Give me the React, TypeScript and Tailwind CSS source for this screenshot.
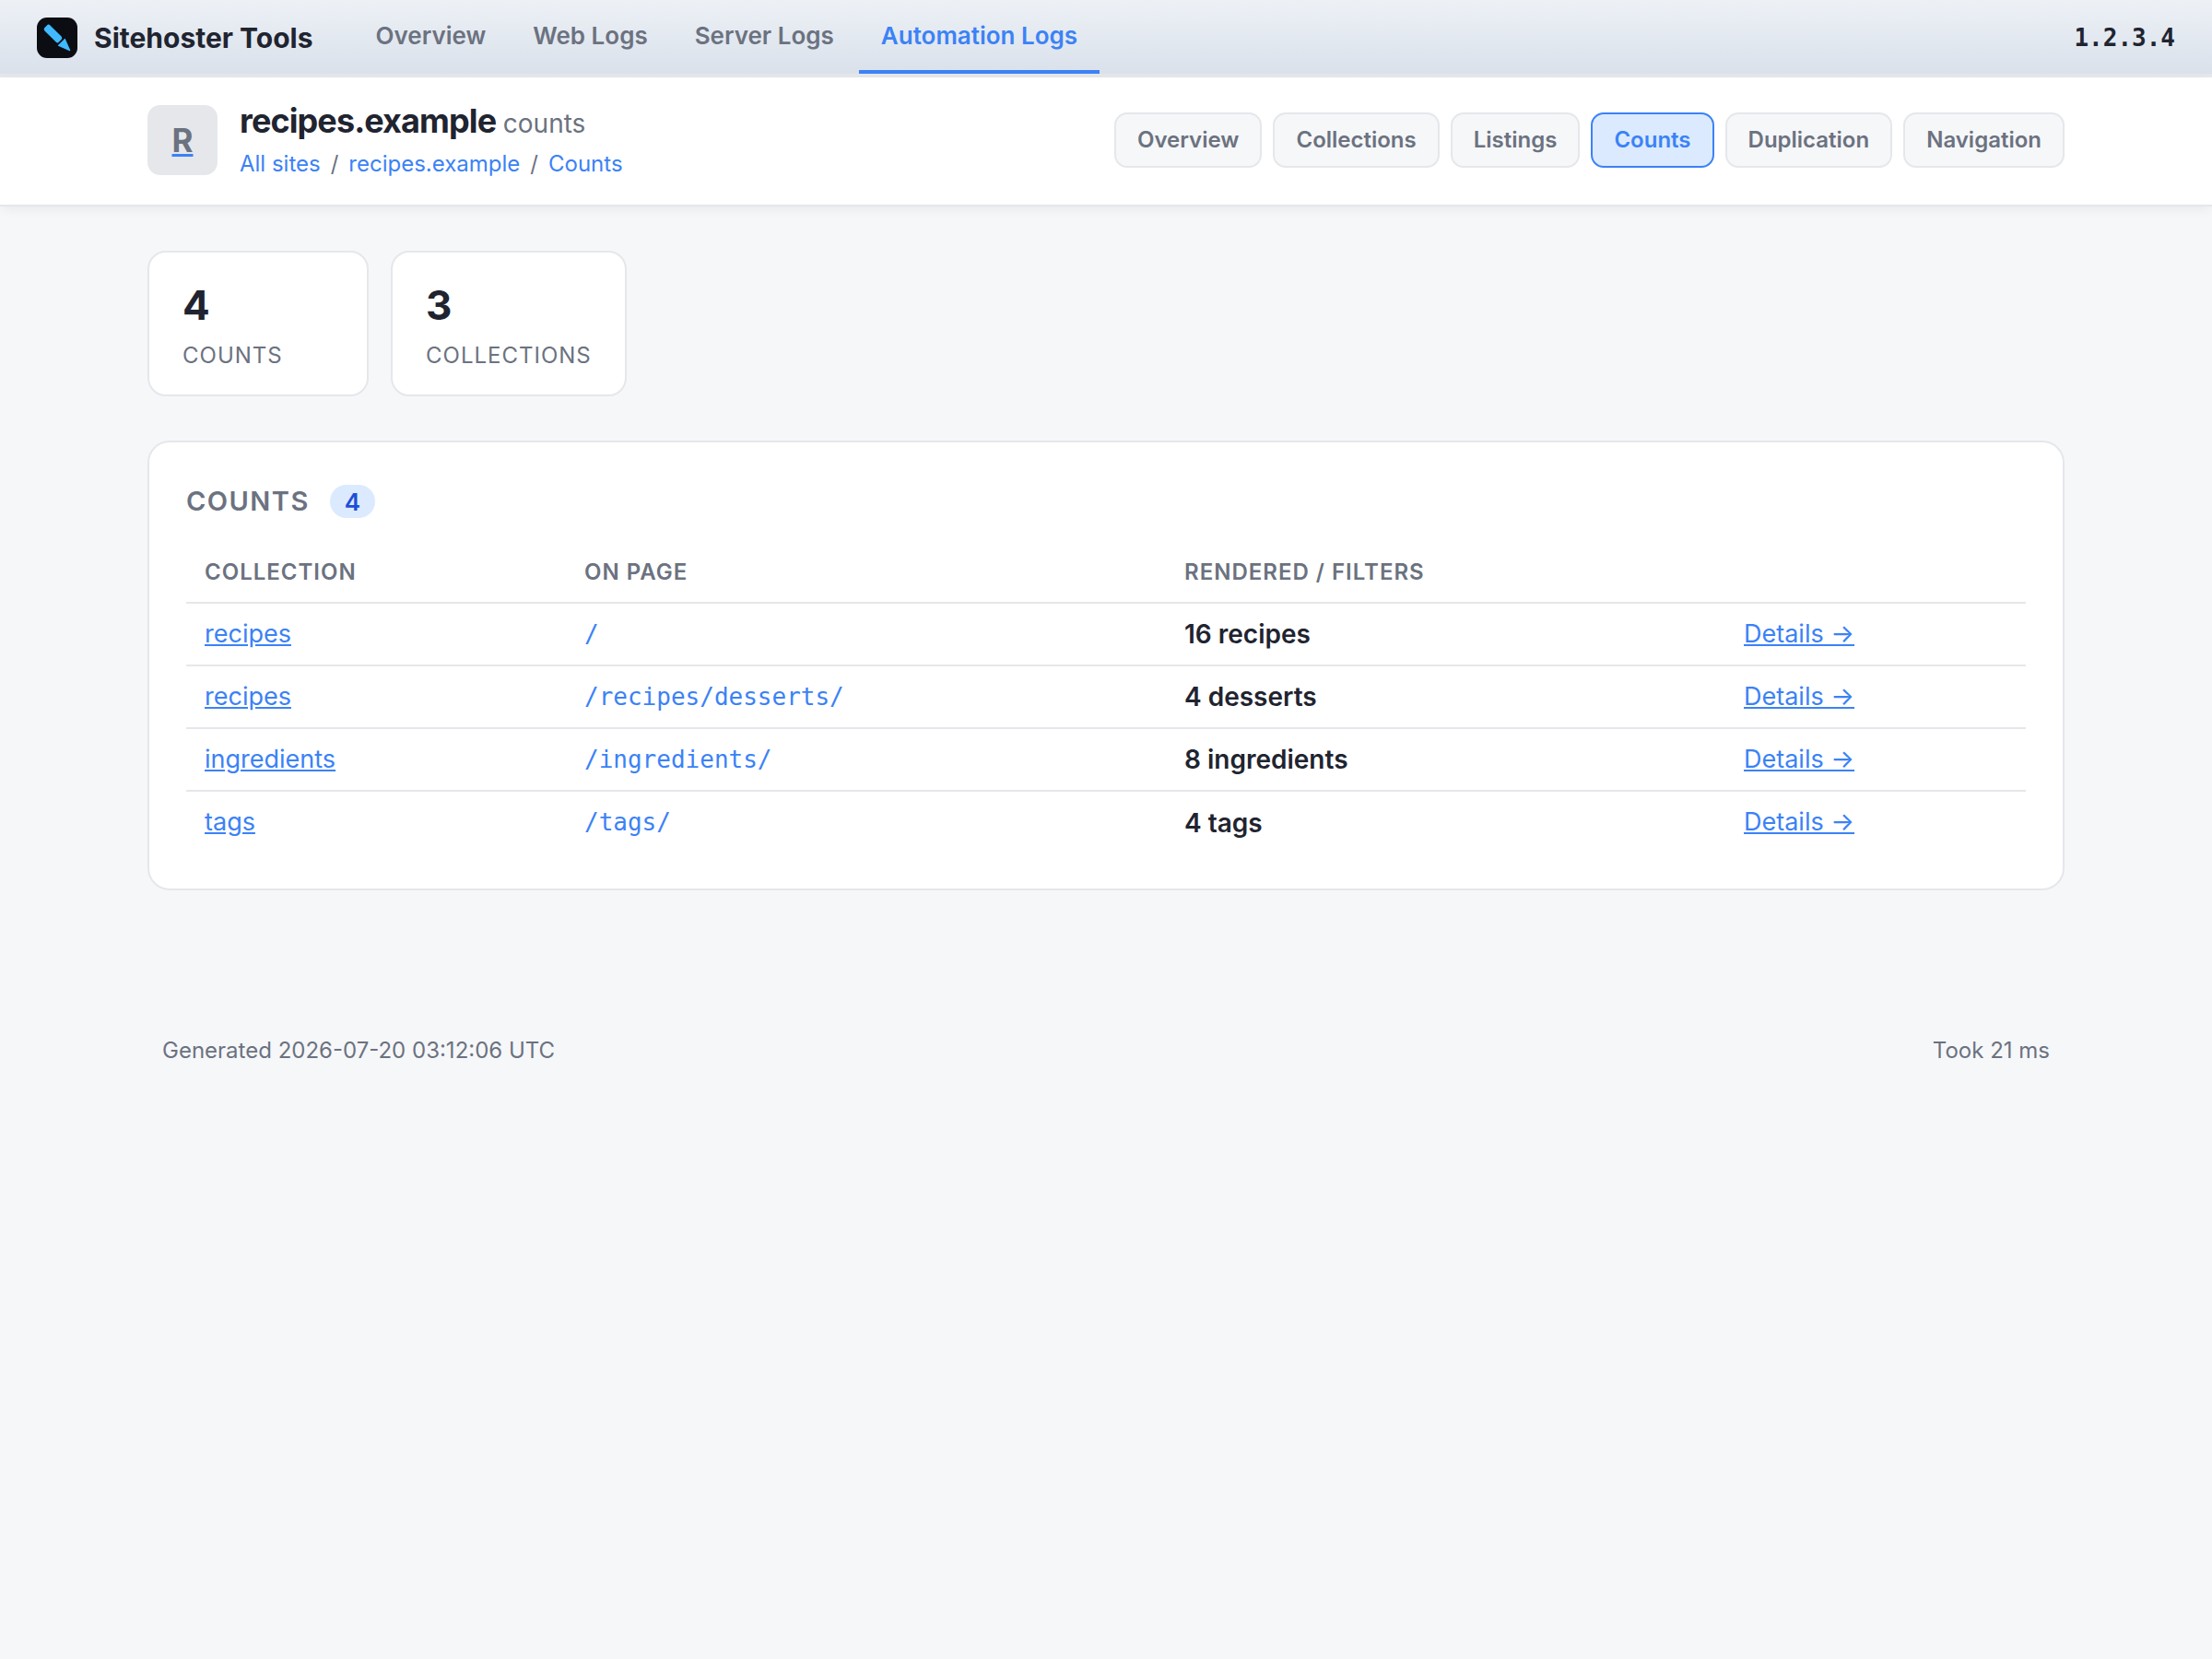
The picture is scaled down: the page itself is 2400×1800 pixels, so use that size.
import clsx from 'clsx';

interface NavItem {
    label: string;
    active?: boolean;
}

interface CountRow {
    id: number;
    collection: string;
    page: string;
    rendered: string;
}

const mainNav: NavItem[] = [
    { label: 'Overview' },
    { label: 'Web Logs' },
    { label: 'Server Logs' },
    { label: 'Automation Logs', active: true },
];

const siteNav: NavItem[] = [
    { label: 'Overview' },
    { label: 'Collections' },
    { label: 'Listings' },
    { label: 'Counts', active: true },
    { label: 'Duplication' },
    { label: 'Navigation' },
];

const crumbs = ['All sites', 'recipes.example', 'Counts'];

const stats = [
    { value: 4, label: 'Counts' },
    { value: 3, label: 'Collections' },
];

const rows: CountRow[] = [
    { id: 1, collection: 'recipes', page: '/', rendered: '16 recipes' },
    { id: 2, collection: 'recipes', page: '/recipes/desserts/', rendered: '4 desserts' },
    { id: 3, collection: 'ingredients', page: '/ingredients/', rendered: '8 ingredients' },
    { id: 4, collection: 'tags', page: '/tags/', rendered: '4 tags' },
];

const mono = "font-['DejaVu_Sans_Mono',monospace]";

const Logo = () => (
    <svg viewBox="0 0 44 44" className="size-11" aria-hidden="true">
        <rect width="44" height="44" rx="11" fill="#0b0d12" />
        <g fill="#40b9ff" transform="translate(11.5 11.5) rotate(45)">
            <rect x="-2.5" y="-4.2" width="22" height="8.4" rx="2.4" />
            <path d="M21.3 -5 Q20.8 -5.6 21.8 -5.4 L34.5 -0.5 Q35.3 0 34.5 0.5 L21.8 5.4 Q20.8 5.6 21.3 5 Z" />
        </g>
    </svg>
);

const TopBar = () => (
    <header className="flex h-21 items-stretch border-b-4 border-[#e5e7eb] bg-linear-to-b from-[#edf1f6] to-[#dae1eb] px-10">
        <a href="#home" className="mr-11 flex items-center gap-[18px] pt-0.5 text-[30px] font-bold">
            <Logo />
            <span>Sitehoster Tools</span>
        </a>
        <nav className="flex items-stretch gap-[3px]" aria-label="Main">
            {mainNav.map((item) => (
                <a
                    key={item.label}
                    href="#logs"
                    className={clsx(
                        'flex items-center border-b-4 px-6 text-[26px] font-semibold',
                        item.active ? 'border-[#3b82f6] text-[#3b82f6]' : 'border-transparent text-[#6b7280]'
                    )}
                >
                    {item.label}
                </a>
            ))}
        </nav>
        <span className={`ml-auto self-center pt-0.5 text-[26px] font-bold ${mono}`}>1.2.3.4</span>
    </header>
);

const SiteHeader = () => (
    <div className="border-b-2 border-[#e5e7eb] bg-white shadow-[0_4px_12px_-2px_rgba(0,0,0,0.07)]">
        <div className="mx-auto flex h-[138px] max-w-[2080px] items-center gap-6 pb-0.5">
            <a
                href="#site"
                className="flex size-19 shrink-0 items-center justify-center rounded-[14px] bg-[#e5e7eb] text-[35px] font-bold text-[#6b7280] underline decoration-[#3b82f6]"
            >
                R
            </a>
            <div>
                <h1 className="text-[36px] leading-[44px] font-bold tracking-tight">
                    recipes.example <span className="text-[28px] font-normal tracking-normal text-[#6b7280]">counts</span>
                </h1>
                <nav className="mt-1 flex gap-[11px] text-[24px] leading-9" aria-label="Breadcrumb">
                    {crumbs.map((crumb, i) => (
                        <span key={crumb} className="flex gap-[11px]">
                            {i > 0 && <span className="text-[#6b7280]">/</span>}
                            <a href="#crumb" className="text-[#3b82f6]">{crumb}</a>
                        </span>
                    ))}
                </nav>
            </div>
            <nav className="ml-auto flex gap-3" aria-label="Site">
                {siteNav.map((item) => (
                    <a
                        key={item.label}
                        href="#section"
                        className={clsx(
                            'flex h-15 items-center rounded-[14px] border-2 px-[23px] text-[24px] font-semibold',
                            item.active
                                ? 'border-[#3b82f6] bg-[#dbeafe] text-[#3b82f6]'
                                : 'border-[#e5e7eb] bg-[#f6f7f9] text-[#6b7280]'
                        )}
                    >
                        {item.label}
                    </a>
                ))}
            </nav>
        </div>
    </div>
);

const StatCards = () => (
    <div className="flex gap-6">
        {stats.map((stat) => (
            <div key={stat.label} className="min-w-60 rounded-[20px] border-2 border-[#e5e7eb] bg-white px-9 pt-8 pb-6">
                <div className="text-[44px] leading-[50px] font-bold">{stat.value}</div>
                <div className="mt-3 text-[24px] leading-9 tracking-[1px] text-[#6b7280] uppercase">{stat.label}</div>
            </div>
        ))}
    </div>
);

const CountsTable = () => (
    <table className="w-full table-fixed border-collapse text-left">
        <colgroup>
            <col className="w-[412px]" />
            <col className="w-[651px]" />
            <col className="w-[607px]" />
            <col />
        </colgroup>
        <thead>
            <tr className="h-[66px] border-b-2 border-[#e5e7eb] text-[24px] tracking-[1px] text-[#6b7280] uppercase">
                <th className="px-5 font-semibold">Collection</th>
                <th className="px-5 font-semibold">On page</th>
                <th className="px-5 font-semibold">Rendered / Filters</th>
                <th className="px-5" aria-label="Details" />
            </tr>
        </thead>
        <tbody>
            {rows.map((row) => (
                <tr key={row.id} className="h-17 border-b-2 border-[#e5e7eb] text-[27px] last:border-b-0">
                    <td className="px-5">
                        <a href="#collection" className="text-[#3b82f6] underline">{row.collection}</a>
                    </td>
                    <td className="px-5">
                        <a href="#page" className={`text-[26px] text-[#3b82f6] ${mono}`}>{row.page}</a>
                    </td>
                    <td className="px-5 text-[28px] font-semibold">{row.rendered}</td>
                    <td className="px-5">
                        <a href="#details" className="text-[#3b82f6] underline">Details →</a>
                    </td>
                </tr>
            ))}
        </tbody>
    </table>
);

export default function App() {
    return (
        <div className="min-h-screen bg-[#f6f7f9] font-[Inter,sans-serif] text-[#1f2430]">
            <TopBar />
            <SiteHeader />
            <main className="mx-auto max-w-[2080px] pt-12">
                <StatCards />
                <section className="mt-12 rounded-3xl border-2 border-[#e5e7eb] bg-white px-10 pt-10 pb-[38px]">
                    <h2 className="mb-5 flex h-12 items-center gap-[22px] text-[29px] font-semibold tracking-wider text-[#6b7280] uppercase">
                        Counts
                        <span className="flex h-9 items-center rounded-full bg-[#dbeafe] px-4 text-[26px] tracking-normal text-[#1d4ed8]">4</span>
                    </h2>
                    <CountsTable />
                </section>
            </main>
            <footer className="mx-auto mt-[156px] flex max-w-[2080px] justify-between px-4 text-[24px] leading-9 text-[#6b7280]">
                <span>Generated 2026-07-20 03:12:06 UTC</span>
                <span>Took 21 ms</span>
            </footer>
        </div>
    );
}
